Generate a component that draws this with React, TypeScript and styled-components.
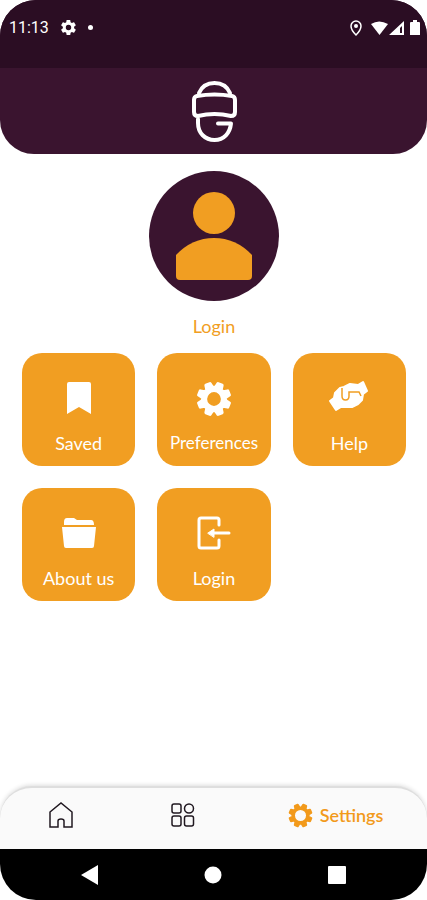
import React from "react";
import styled, { createGlobalStyle } from "styled-components";

const ORANGE = "#f19e22";
const PLUM = "#3a142f";

const GlobalStyle = createGlobalStyle`
  * { box-sizing: border-box; }
  body { margin: 0; background: #fff; font-family: Lato, "Open Sans", sans-serif; }
  button { font: inherit; border: 0; padding: 0; background: none; cursor: pointer; }
  a { color: inherit; text-decoration: none; }
  svg { display: block; }
`;

const Screen = styled.div`
  display: flex;
  flex-direction: column;
  min-height: 100vh;
  overflow: hidden;
  border-radius: 36px;
  background: #fff;
`;

const Header = styled.header`
  overflow: hidden;
  border-radius: 0 0 34px 34px;
  background: ${PLUM};
`;

const StatusBar = styled.div`
  display: flex;
  justify-content: space-between;
  height: 68px;
  padding: 17px 7px 0 9px;
  background: #2b0d23;
  color: #fff;
  font-family: Roboto, sans-serif;
  font-size: 16px;
  line-height: 21px;
`;

const StatusGroup = styled.div<{ $gap: number }>`
  display: flex;
  align-items: center;
  gap: ${({ $gap }) => $gap}px;
  height: 21px;
`;

const Dot = styled.span`
  width: 5px;
  height: 5px;
  border-radius: 50%;
  background: #fff;
`;

const Brand = styled.div`
  display: flex;
  justify-content: center;
  height: 86px;
  padding-top: 10px;
`;

const Content = styled.main`
  display: flex;
  flex: 1;
  flex-direction: column;
  align-items: center;
  padding: 17px 21px 16px 22px;
`;

const Avatar = styled.div`
  width: 130px;
  height: 130px;
  border-radius: 50%;
  background: ${PLUM};
`;

const LoginLink = styled.a`
  margin: 15px 0 16px;
  color: ${ORANGE};
  font-size: 18px;
  line-height: 21px;
`;

const Tiles = styled.div`
  display: grid;
  grid-template-columns: repeat(3, 1fr);
  gap: 22px;
  width: 100%;
`;

const Tile = styled.button<{ $compact: boolean }>`
  display: flex;
  flex-direction: column;
  align-items: center;
  justify-content: space-between;
  height: 113px;
  padding: 25px 0 12px;
  border-radius: 20px;
  background: ${ORANGE};
  color: #fff;
  font-size: ${({ $compact }) => ($compact ? 17 : 18)}px;
  line-height: 22px;
`;

const TileIcon = styled.span`
  display: flex;
  align-items: center;
  height: 42px;
`;

const TabBar = styled.nav`
  display: grid;
  grid-template-columns: 2fr 2fr 3fr;
  align-items: center;
  height: 63px;
  padding-bottom: 7px;
  border-top: 2px solid #dedede;
  border-radius: 32px 32px 0 0;
  background: #fafafa;
  box-shadow: 0 -1px 4px #0002;
`;

const Tab = styled.button<{ $active?: boolean }>`
  display: flex;
  align-items: center;
  justify-content: center;
  gap: 7px;
  height: 40px;
  color: ${({ $active }) => ($active ? "#f29a1b" : "#201820")};
  font-size: 18px;
  font-weight: ${({ $active }) => ($active ? 600 : 400)};
`;

const SystemBar = styled.div`
  display: grid;
  grid-template-columns: repeat(3, 1fr);
  height: 51px;
  padding: 0 28px;
  background: #000;
`;

const SystemButton = styled.button`
  display: flex;
  align-items: center;
  justify-content: center;
  color: #fff;
`;

const gearOutline = Array.from({ length: 8 }, (_, tooth) =>
  [[-15, 11], [-8, 15], [8, 15], [15, 11]]
    .map(([offset, radius]) => {
      const angle = ((tooth * 45 + 22.5 + offset) * Math.PI) / 180;
      return `${(17 + radius * Math.sin(angle)).toFixed(2)} ${(17 - radius * Math.cos(angle)).toFixed(2)}`;
    })
    .join("L"),
).join("L");

const Gear = ({ size, hole }: { size: number; hole: number }) => (
  <svg width={size} height={size} viewBox="0 0 34 34" aria-hidden="true">
    <path
      d={`M${gearOutline}ZM17 ${17 - hole}a${hole} ${hole} 0 1 0 0 ${hole * 2}a${hole} ${hole} 0 1 0 0-${hole * 2}Z`}
      fill="currentColor" fillRule="evenodd" stroke="currentColor" strokeWidth="3" strokeLinejoin="round"
    />
  </svg>
);

const StatusGear = () => (
  <svg width="15" height="15" viewBox="2 2 20 20" aria-hidden="true">
    <path fill="#fff" d="M19.4 13c.1-.6.1-1.3 0-2l2.1-1.6c.2-.1.3-.4.1-.6l-2-3.5c-.1-.2-.4-.3-.6-.2l-2.5 1-1.7-1-.4-2.6c0-.3-.2-.5-.5-.5h-4c-.2 0-.4.2-.5.4L9 5.1l-1.7 1-2.4-1c-.3-.1-.5 0-.6.2l-2 3.5c-.1.2-.1.5.1.6L4.5 11v2l-2.1 1.6c-.2.2-.2.4-.1.6l2 3.5c.1.2.4.3.6.2l2.4-1 1.7 1 .4 2.6c.1.3.3.5.5.5h4c.3 0 .5-.2.5-.5l.4-2.6 1.7-1 2.5 1c.2.1.5 0 .6-.2l2-3.5c.1-.2.1-.4-.1-.6ZM12 15.6a3.6 3.6 0 1 1 0-7.2 3.6 3.6 0 0 1 0 7.2Z" />
  </svg>
);

const Logo = () => (
  <svg width="48" height="68" viewBox="0 0 48 68" role="img" aria-label="Home" fill="none" stroke="#fff" strokeWidth="4" strokeLinecap="round" strokeLinejoin="round">
    <path d="M9 15C12 8 18 5 24.500 5S37 8 40 15" />
    <path d="M7 18Q24.500 15 42 18Q45 18.500 45 22V34Q45 38 41 38Q24.500 34 8 38Q4 38 4 34V22Q4 18.500 7 18Z" />
    <path d="M8 41V45C8 55 15 62 24.500 62S40 55 41 45.500H28" />
  </svg>
);

const Bookmark = () => (
  <svg width="34" height="42" viewBox="0 0 34 42" aria-hidden="true">
    <path d="M5 6Q5 4 7 4H27Q29 4 29 6V36L17 29L5 36Z" fill="#fff" />
  </svg>
);

const HelpingHands = () => (
  <svg width="42" height="42" viewBox="0 0 42 42" aria-hidden="true" fill="#fff">
    <path stroke="#fff" strokeWidth="2" strokeLinejoin="round" d="M2 23L6 20L7 15L12 10L16 9L22 6L30 7L35 4L39 13L35 16L34 22L30 26L24 29H13L8 32Z" />
    <path d="M14 10V18Q14 22 17.500 22T21 18V14H31L33 18" fill="none" stroke={ORANGE} strokeWidth="1.500" />
  </svg>
);

const Folder = () => (
  <svg width="34" height="42" viewBox="0 0 34 42" aria-hidden="true" fill="#fff">
    <path d="M2 12V9Q2 5 5 5H12L15 7H29Q32 7 32 12Z" />
    <path d="M0 14H34L32 33Q32 35 30 35H4Q2 35 2 33Z" />
  </svg>
);

const EnterDoor = () => (
  <svg width="34" height="42" viewBox="0 0 34 42" aria-hidden="true" strokeLinecap="round" strokeLinejoin="round">
    <path d="M22 12V7Q22 5 20 5H4Q2 5 2 7V33Q2 35 4 35H20Q22 35 22 33V27" fill="none" stroke="#fff" strokeWidth="3" />
    <path d="M32 20H14" stroke="#fff" strokeWidth="3" />
    <path d="M11 20L17 16V24Z" fill="#fff" stroke="#fff" />
  </svg>
);

const tiles = [
  { label: "Saved", icon: <Bookmark /> },
  { label: "Preferences", icon: <Gear size={36} hole={8} /> },
  { label: "Help", icon: <HelpingHands /> },
  { label: "About us", icon: <Folder /> },
  { label: "Login", icon: <EnterDoor /> },
];

export default function App() {
  return (
    <>
      <GlobalStyle />
      <Screen>
        <Header>
          <StatusBar>
            <StatusGroup $gap={12}>
              <span>11:13</span>
              <StatusGear />
              <Dot />
            </StatusGroup>
            <StatusGroup $gap={5}>
              <svg width="55" height="18" viewBox="0 0 55 18" aria-hidden="true" fill="#fff">
                <path d="M1 7a5 5 0 0 1 10 0Q11 11 6 16Q1 11 1 7Z" fill="none" stroke="#fff" strokeWidth="1.500" />
                <circle cx="6" cy="7" r="2" />
                <path d="M21 5Q29 0 38 5L29.500 16Z" />
                <path fillRule="evenodd" d="M39 16L54 2V16ZM50 9V14H52V7Z" />
              </svg>
              <svg width="10" height="16" viewBox="0 0 10 16" aria-hidden="true">
                <path d="M0 3Q0 2 1 2H3V0H7V2H9Q10 2 10 3V15H0Z" fill="#fff" />
              </svg>
            </StatusGroup>
          </StatusBar>
          <Brand><Logo /></Brand>
        </Header>
        <Content>
          <Avatar>
            <svg width="130" height="130" viewBox="0 0 130 130" aria-hidden="true" fill={ORANGE}>
              <circle cx="65" cy="42" r="21" />
              <path d="M27 84Q43 67 65 67T103 84V105Q103 109 99 109H31Q27 109 27 105Z" />
            </svg>
          </Avatar>
          <LoginLink href="#login">Login</LoginLink>
          <Tiles>
            {tiles.map(({ label, icon }) => (
              <Tile key={label} type="button" $compact={label.length > 10}>
                <TileIcon>{icon}</TileIcon>
                <span>{label}</span>
              </Tile>
            ))}
          </Tiles>
        </Content>
        <TabBar>
          <Tab type="button" aria-label="Home">
            <svg width="24" height="26" viewBox="0 0 24 26" fill="none" stroke="currentColor" strokeWidth="1.500">
              <path d="M1 10L12 1L23 10V25H15V19Q15 17 12 17T9 19V25H1Z" />
            </svg>
          </Tab>
          <Tab type="button" aria-label="Categories">
            <svg width="24" height="24" viewBox="0 0 24 24" fill="none" stroke="currentColor" strokeWidth="1.500">
              <rect x="1" y="1" width="9" height="9" rx="2" />
              <circle cx="18" cy="5.500" r="4.500" />
              <rect x="1" y="13" width="9" height="10" rx="2" />
              <rect x="13.500" y="13" width="9" height="10" rx="2" />
            </svg>
          </Tab>
          <Tab type="button" $active><Gear size={25} hole={9} /><span>Settings</span></Tab>
        </TabBar>
        <SystemBar>
          <SystemButton type="button" aria-label="Back">
            <svg width="18" height="20" viewBox="0 0 18 20"><path d="M0 10L17 0V20Z" fill="currentColor" /></svg>
          </SystemButton>
          <SystemButton type="button" aria-label="Home screen">
            <svg width="18" height="18" viewBox="0 0 18 18"><circle cx="9" cy="9" r="8.500" fill="currentColor" /></svg>
          </SystemButton>
          <SystemButton type="button" aria-label="Recent apps">
            <svg width="18" height="18" viewBox="0 0 18 18"><rect width="18" height="18" rx="1" fill="currentColor" /></svg>
          </SystemButton>
        </SystemBar>
      </Screen>
    </>
  );
}
